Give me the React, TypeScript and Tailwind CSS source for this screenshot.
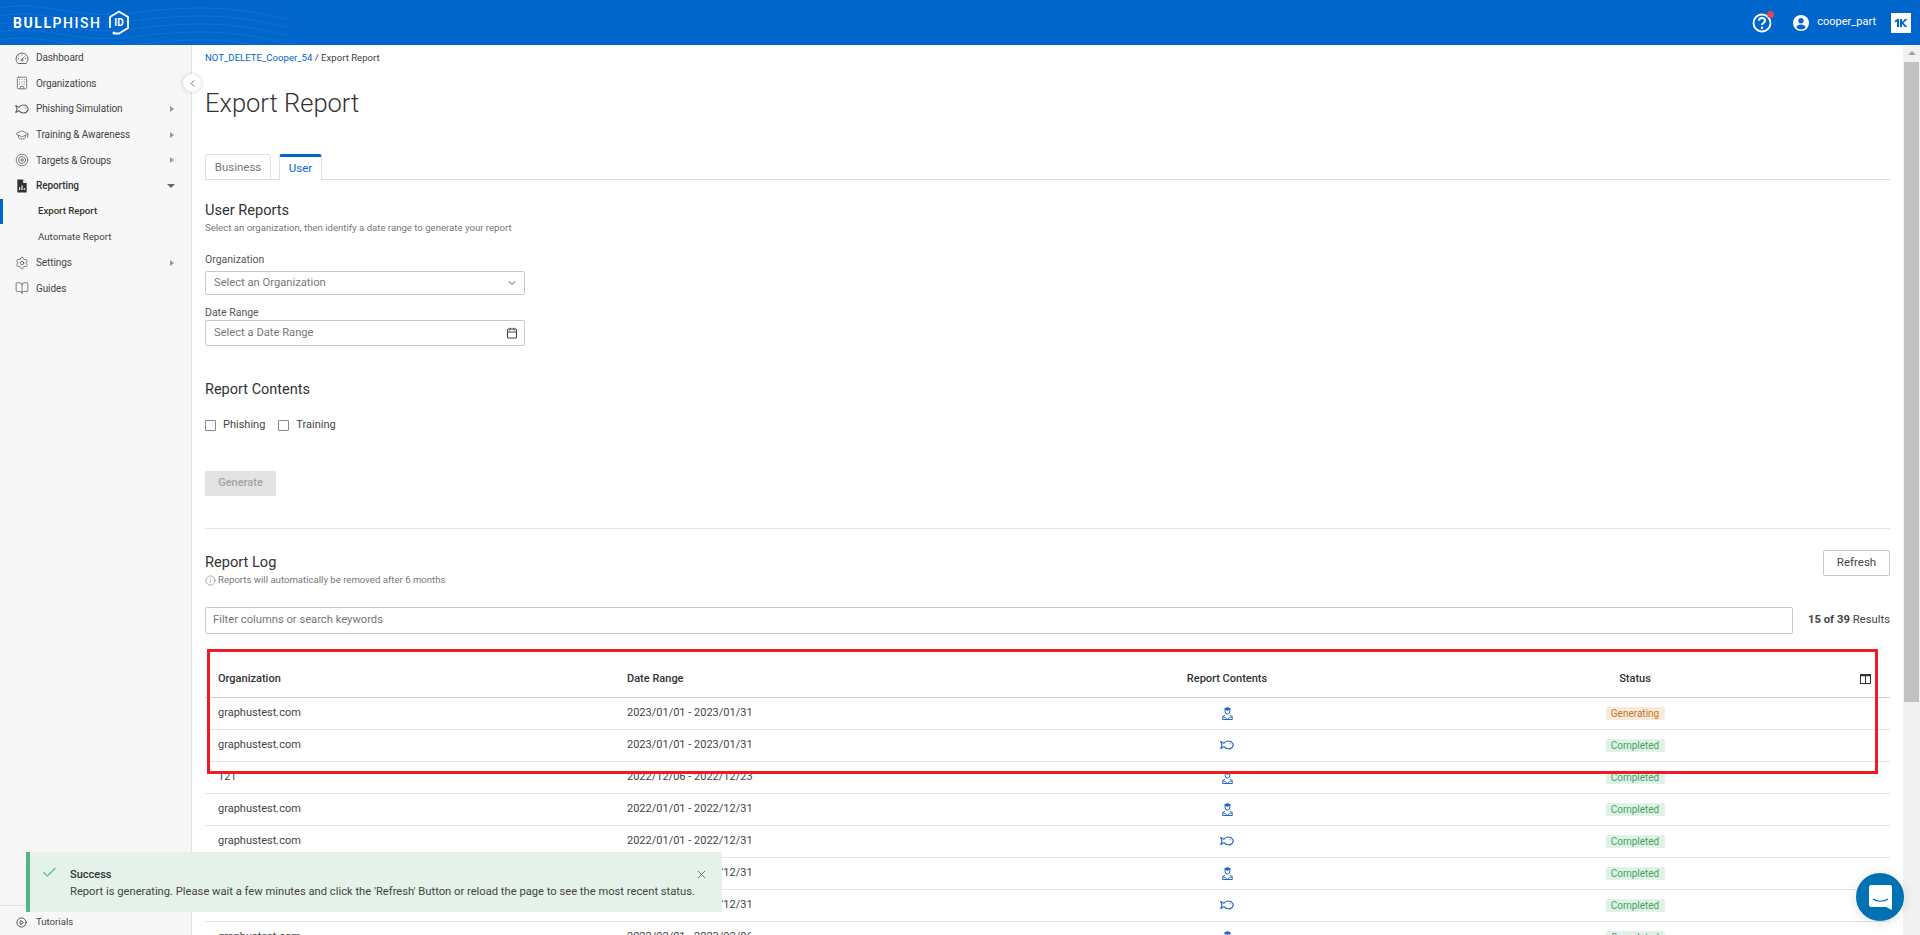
import { BookOpen, Building, Calendar, ChevronDown, ChevronLeft, CirclePlay, GraduationCap, Info, Settings, Target, X, Check } from 'lucide-react';

const font = { fontFamily: 'Roboto, sans-serif' };

function FishIcon({ className = '' }: { className?: string }) {
  return (
    <svg width="14" height="10" viewBox="0 0 14 10" fill="none" stroke="currentColor" strokeWidth="1.1" strokeLinejoin="round" className={className}>
      <path d="M.8 1.600l3 1.700C5 1.800 6.800 1 8.500 1c2.300 0 4.200 1.800 4.800 4-.6 2.200-2.500 4-4.800 4-1.700 0-3.500-.8-4.700-2.300l-3 1.700L2 5z" />
      <circle cx="10.200" cy="3.800" r=".6" fill="currentColor" stroke="none" />
    </svg>
  );
}

function TrainingIcon({ className = '' }: { className?: string }) {
  return (
    <svg width="11" height="13" viewBox="0 0 11 13" fill="none" stroke="currentColor" strokeWidth="1" className={className}>
      <path d="M2.500 2l3-1.500 3 1.500-3 1.300z" fill="currentColor" />
      <path d="M3.200 3v1.800a2.300 2.300 0 0 0 4.600 0V3" />
      <path d="M3 8.200C1.500 8.500.7 9.300.7 10.500v2h9.600v-2c0-1.200-.8-2-2.300-2.300" />
      <path d="M.7 10c2 0 3.500.8 4.800 2.500C6.800 10.800 8.300 10 10.300 10" />
    </svg>
  );
}

function GaugeIcon() {
  return (
    <svg width="14" height="14" viewBox="0 0 14 14" fill="none" stroke="currentColor" strokeWidth="1">
      <path d="M3 12.500a6 6 0 1 1 8 0z" />
      <path d="M7 8.500l2.500-3" />
      <circle cx="7" cy="9" r="1" />
      <path d="M3 7.500h1M10 7.500h1M7 3.500v1M4.200 4.700l.7.7" />
    </svg>
  );
}

function ColumnsIcon() {
  return (
    <svg width="11" height="10" viewBox="0 0 11 10" fill="none" stroke="#333" strokeWidth="1" className="ml-[21px]">
      <rect x=".5" y=".5" width="10" height="9" />
      <path d="M.5 1.500h10" strokeWidth="1.500" />
      <path d="M5.500 1v8.500" />
    </svg>
  );
}

function ReportingIcon() {
  return (
    <svg width="14" height="14" viewBox="0 0 24 24" fill="#333">
      <path d="M4 1h10l6 6v16H4z" />
      <path d="M8 19v-5M12 19v-8M16 19v-3" stroke="#f7f7f7" strokeWidth="2" />
      <path d="M14 1v6h6" fill="#f7f7f7" />
    </svg>
  );
}

function Logo() {
  return (
    <div className="flex items-center text-white">
      <span className="text-[14px] leading-none tracking-[1.55px]">
        <span className="font-bold">BULL</span>
        <span className="font-medium">PHISH</span>
      </span>
      <svg width="24" height="27" viewBox="0 0 24 27" fill="none" stroke="white" strokeWidth="1.8" className="ml-[5px]">
        <path d="M3 19V8l9-5.500L21 8v11l-9 5.500H8" />
        <circle cx="7" cy="24" r="1.500" fill="white" stroke="none" />
        <text x="12" y="17" textAnchor="middle" fontSize="10" fontWeight="700" fill="white" stroke="none" fontFamily="Roboto, sans-serif">ID</text>
      </svg>
    </div>
  );
}

function Waves() {
  return (
    <svg width="290" height="45" viewBox="0 0 290 45" fill="none" stroke="#ffffff" strokeOpacity="0.07" className="absolute left-0 top-0">
      <path d="M0 8c40-8 70 10 120 6s90-14 170 6" />
      <path d="M0 16c40-8 70 10 120 6s90-14 170 6" />
      <path d="M0 24c40-8 70 10 120 6s90-14 170 6" />
      <path d="M0 32c40-8 70 10 120 6s90-14 170 6" />
      <path d="M0 40c40-8 70 10 120 6s90-14 170 6" />
    </svg>
  );
}

const navItems = [
  { label: 'Dashboard', icon: <GaugeIcon /> },
  { label: 'Organizations', icon: <Building size={14} strokeWidth={1.4} /> },
  { label: 'Phishing Simulation', icon: <FishIcon />, arrow: true },
  { label: 'Training & Awareness', icon: <GraduationCap size={14} strokeWidth={1.4} />, arrow: true },
  { label: 'Targets & Groups', icon: <Target size={14} strokeWidth={1.4} />, arrow: true },
];

function NavRow({ label, icon, arrow }: { label: string; icon: React.ReactNode; arrow?: boolean }) {
  return (
    <div className="h-[25.6px] flex items-center pl-[15px] pr-[17px] text-[#444]">
      <span className="w-[21px] text-[#666] flex">{icon}</span>
      <span className="text-[10px] tracking-[-0.1px] flex-1">{label}</span>
      {arrow && <span className="w-0 h-0 border-y-[3.5px] border-y-transparent border-l-[4px] border-l-[#999]" />}
    </div>
  );
}

function Sidebar() {
  return (
    <aside className="w-[192px] shrink-0 bg-[#f7f7f7] border-r border-[#e2e2e2] flex flex-col">
      {navItems.map((n) => (
        <NavRow key={n.label} {...n} />
      ))}
      <div className="h-[25.6px] flex items-center pl-[15px] pr-[17px] text-[#333] font-medium">
        <span className="w-[21px] flex"><ReportingIcon /></span>
        <span className="text-[10px] tracking-[-0.1px] flex-1">Reporting</span>
        <span className="w-0 h-0 border-x-[4px] border-x-transparent border-t-[4px] border-t-[#666] mr-[-1px]" />
      </div>
      <div className="h-[25.6px] flex items-center pl-[35px] border-l-[3px] border-[#0066cc] text-[9.6px] font-medium text-[#333]">Export Report</div>
      <div className="h-[25.6px] flex items-center pl-[38px] text-[9.7px] text-[#444]">Automate Report</div>
      <NavRow label="Settings" icon={<Settings size={14} strokeWidth={1.4} />} arrow />
      <NavRow label="Guides" icon={<BookOpen size={14} strokeWidth={1.4} />} />
      <div className="mt-auto border-t border-[#e2e2e2] h-[30px] pt-[3px] flex items-center pl-[16px] text-[#444]">
        <span className="w-[20px] flex"><CirclePlay size={11} /></span>
        <span className="text-[9.6px]">Tutorials</span>
      </div>
    </aside>
  );
}

const rows = [
  ['graphustest.com', '2023/01/01 - 2023/01/31', 't', 'Generating'],
  ['graphustest.com', '2023/01/01 - 2023/01/31', 'p', 'Completed'],
  ['121', '2022/12/06 - 2022/12/23', 't', 'Completed'],
  ['graphustest.com', '2022/01/01 - 2022/12/31', 't', 'Completed'],
  ['graphustest.com', '2022/01/01 - 2022/12/31', 'p', 'Completed'],
  ['graphustest.com', '2022/01/01 - 2022/12/31', 't', 'Completed'],
  ['graphustest.com', '2022/01/01 - 2022/12/31', 'p', 'Completed'],
  ['graphustest.com', '2022/02/01 - 2023/02/06', 't', 'Completed'],
];

function ReportTable() {
  return (
    <div className="relative mt-[15px]">
      {/* red annotation from the screenshot */}
      <div className="absolute left-[2px] top-0 w-[1671px] h-[125px] border-[3px] border-[#ed1c24] z-10 pointer-events-none" />
      <div className="grid grid-cols-[409px_409px_408px_408px_51px] h-[49px] items-center border-b border-[#ccc] text-[11px] font-medium text-[#333] pt-[12px]">
        <div className="pl-[13px]">Organization</div>
        <div className="pl-[13px]">Date Range</div>
        <div className="text-center">Report Contents</div>
        <div className="text-center">Status</div>
        <div className="flex"><ColumnsIcon /></div>
      </div>
      {rows.map((r, i) => (
        <div key={i} className="grid grid-cols-[409px_409px_408px_408px_51px] h-[32px] pb-[1px] items-center border-b border-[#e3e3e3] text-[11px] text-[#444]">
          <div className="pl-[13px]">{r[0]}</div>
          <div className="pl-[13px]">{r[1]}</div>
          <div className="flex justify-center text-[#2563c9]">
            {r[2] === 't' ? <TrainingIcon /> : <FishIcon />}
          </div>
          <div className="flex justify-center">
            {r[3] === 'Generating' ? (
              <span className="w-[59px] h-[13px] rounded-[2px] bg-[#faeadb] text-[#c2761d] text-[10px] leading-[13px] text-center">Generating</span>
            ) : (
              <span className="w-[59px] h-[13px] rounded-[2px] bg-[#e2f1e8] text-[#3fa564] text-[10px] leading-[13px] text-center">Completed</span>
            )}
          </div>
          <div />
        </div>
      ))}
    </div>
  );
}

function Main() {
  return (
    <main className="flex-1 min-w-0 pl-[13px] pr-[13px] overflow-hidden">
      <div className="pt-[7px] h-[19px] text-[9.6px] leading-[12px] text-[#444]">
        <span className="text-[#0066cc]">NOT_DELETE_Cooper_54</span> / Export Report
      </div>
      <h1 className="mt-[20px] text-[25.5px] leading-[38px] font-light text-[#333]">Export Report</h1>
      <div className="mt-[33px] flex items-end gap-[8px] h-[25px] border-b border-[#ddd]">
        <div className="h-[25px] w-[66px] pt-[2px] border border-b-0 border-[#e0e0e0] rounded-t-[3px] flex items-center justify-center text-[11.5px] text-[#777]">Business</div>
        <div className="h-[26px] w-[43px] -mb-px bg-white border-x border-[#e0e0e0] border-t-[3px] border-t-[#0066cc] rounded-t-[3px] flex items-center justify-center text-[11.5px] text-[#0066cc]">User</div>
      </div>
      <h2 className="mt-[20px] text-[14.6px] leading-[20px] font-normal text-[#333]">User Reports</h2>
      <p className="mt-[1px] text-[9.6px] leading-[14px] text-[#777]">Select an organization, then identify a date range to generate your report</p>
      <label className="block mt-[18px] text-[10.5px] leading-[14px] text-[#555]">Organization</label>
      <div className="mt-[4px] w-[320px] h-[24px] border border-[#c8c8c8] rounded-[2px] flex items-center justify-between pl-[8px] pr-[6px] text-[11.2px] text-[#777]">
        Select an Organization
        <ChevronDown size={12} className="text-[#555]" />
      </div>
      <label className="block mt-[11px] text-[10.5px] leading-[14px] text-[#555]">Date Range</label>
      <div className="w-[320px] h-[26px] border border-[#c8c8c8] rounded-[2px] flex items-center justify-between pl-[8px] pr-[6px] text-[11.2px] text-[#777]">
        Select a Date Range
        <Calendar size={12} strokeWidth={2.2} className="text-[#444]" />
      </div>
      <h2 className="mt-[34px] text-[14.5px] leading-[20px] text-[#333]">Report Contents</h2>
      <div className="mt-[12px] flex items-center h-[32px] pb-[6px] text-[11px] text-[#444]">
        <span className="w-[11px] h-[11px] border border-[#888] rounded-[1px] mr-[7px]" />
        Phishing
        <span className="w-[11px] h-[11px] border border-[#888] rounded-[1px] ml-[13px] mr-[7px]" />
        Training
      </div>
      <button className="mt-[27px] block w-[71px] h-[25px] bg-[#e3e3e3] rounded-[1px] text-[11px] font-medium text-[#a3a3a3]">Generate</button>
      <div className="mt-[32px] border-t border-[#e6e6e6]" />
      <div className="mt-[21px] flex items-start justify-between">
        <div>
          <h2 className="mt-[2px] text-[14.6px] leading-[20px] text-[#333]">Report Log</h2>
          <p className="mt-[1px] flex items-center gap-[2px] text-[9.6px] leading-[14px] text-[#777]"><Info size={11} strokeWidth={1.3} />Reports will automatically be removed after 6 months</p>
        </div>
        <button className="w-[67px] h-[26px] border border-[#c8c8c8] rounded-[2px] text-[11.5px] text-[#444]">Refresh</button>
      </div>
      <div className="mt-[20px] flex items-center">
        <div className="flex-1 h-[27px] border border-[#c8c8c8] rounded-[2px] flex items-center pl-[7px] text-[11.2px] text-[#777]">Filter columns or search keywords</div>
        <div className="w-[97px] text-right text-[11.3px] text-[#444]"><span className="font-bold">15 of 39</span> Results</div>
      </div>
      <ReportTable />
    </main>
  );
}

export default function App() {
  return (
    <div className="relative h-[935px] w-[1920px] overflow-hidden bg-white flex flex-col" style={font}>
      <header className="relative h-[45px] shrink-0 bg-[#0066cc] flex items-center pl-[13px] pr-[9px] overflow-hidden">
        <Waves />
        <div className="relative"><Logo /></div>
        <div className="ml-auto flex items-center text-white">
          <div className="relative mr-[21px]">
            <svg width="20" height="20" viewBox="0 0 20 20" fill="none" stroke="white" strokeWidth="1.8">
              <circle cx="10" cy="10" r="8.5" />
              <path d="M7 7.800c0-1.700 1.300-2.800 3-2.800s3 1.100 3 2.600c0 2.400-3 2.300-3 4.400" strokeWidth="2" />
              <circle cx="10" cy="14.800" r="1.200" fill="white" stroke="none" />
            </svg>
            <span className="absolute -top-[2px] -right-[2px] w-[7px] h-[7px] rounded-full bg-[#d9475a]" />
          </div>
          <svg width="16" height="16" viewBox="0 0 16 16" className="mr-[8px]">
            <circle cx="8" cy="8" r="8" fill="white" />
            <circle cx="8" cy="5.800" r="2.700" fill="#0066cc" />
            <path d="M3.200 12.300c.8-1.900 2.800-2.800 4.800-2.800s4 .9 4.800 2.800A6.500 6.500 0 0 1 8 14.500a6.500 6.500 0 0 1-4.800-2.200z" fill="#0066cc" />
          </svg>
          <span className="text-[11px] mr-[15px]">cooper_part</span>
          <div className="w-[20px] h-[20px] bg-white flex items-center justify-center">
            <svg width="14" height="10" viewBox="0 0 14 10" fill="#0066cc">
              <path d="M1 2.500L3.500 1h1.500v8H3V3.500L1 4.500z" />
              <path d="M6 1h2v3l3-3h2.500L9.500 5l4 4H11L8 6v3H6z" />
            </svg>
          </div>
        </div>
      </header>
      <div className="flex-1 min-h-0 flex">
        <Sidebar />
        <Main />
        {/* scrollbar */}
        <div className="w-[17px] shrink-0 bg-[#f1f1f1] flex flex-col items-center">
          <span className="mt-[6px] w-0 h-0 border-x-[4px] border-x-transparent border-b-[4px] border-b-[#a3a3a3]" />
          <div className="mt-[7px] w-[15px] h-[640px] bg-[#c1c1c1]" />
        </div>
      </div>

      {/* sidebar collapse */}
      <button className="absolute left-[183px] top-[74px] w-[18px] h-[18px] rounded-full bg-white shadow-[0_0_4px_rgba(0,0,0,0.2)] flex items-center justify-center text-[#555]">
        <ChevronLeft size={11} />
      </button>

      {/* toast */}
      <div className="absolute left-[26px] top-[852px] w-[696px] h-[60px] bg-[#e4f2ea] border-l-[4px] border-[#55b585] flex">
        <Check size={17} strokeWidth={1.5} className="ml-[11px] mt-[12px] text-[#55b585]" />
        <div className="ml-[12px] mt-[15px]">
          <div className="text-[11px] leading-[16px] font-medium text-[#333]">Success</div>
          <div className="mt-[1px] text-[11.2px] leading-[16px] text-[#444]">Report is generating. Please wait a few minutes and click the 'Refresh' Button or reload the page to see the most recent status.</div>
        </div>
        <X size={13} strokeWidth={1.5} className="absolute right-[14px] top-[16px] text-[#555]" />
      </div>

      {/* chat launcher */}
      <div className="absolute left-[1856px] top-[873px] w-[48px] h-[48px] rounded-full bg-[#0071b2] flex items-center justify-center shadow-[0_1px_12px_rgba(0,0,0,0.12)]">
        <svg width="23" height="25" viewBox="0 0 23 25">
          <path d="M2 0h19a2 2 0 0 1 2 2v23l-6-3H2a2 2 0 0 1-2-2V2a2 2 0 0 1 2-2z" fill="white" />
          <path d="M4 14c4 3 11 3 15 0" fill="none" stroke="#0071b2" strokeWidth="1.2" />
        </svg>
      </div>
    </div>
  );
}
